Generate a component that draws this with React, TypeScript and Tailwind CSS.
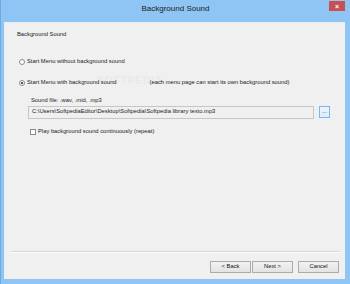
import React from "react";

const font = { fontFamily: '"Liberation Sans", Arial, sans-serif' };

function Radio({ checked }: { checked?: boolean }) {
  return (
    <span className="w-[6px] h-[6px] rounded-full border border-[#8a8a8a] bg-white flex items-center justify-center shrink-0">
      {checked && <span className="w-[2px] h-[2px] rounded-full bg-[#222]" />}
    </span>
  );
}

function Btn({ label }: { label: string }) {
  return (
    <button className="w-[41px] h-[12px] border border-[#acacac] bg-gradient-to-b from-[#f2f2f2] to-[#e3e3e3] text-[5.8px] text-[#111] flex items-center justify-center leading-none">
      {label}
    </button>
  );
}

export default function App() {
  return (
    <div
      className="relative w-[350px] h-[284px] bg-[#8ec5f4] border-l border-[#6fa9de] flex flex-col"
      style={font}
    >
      {/* TITLE BAR */}
      <div className="h-[22px] flex justify-center pt-[3px] text-[8px] text-[#1b1b1b]">
        Background Sound
      </div>
      <div className="absolute top-[1px] right-[5px] w-[16px] h-[10px] bg-[#c75050] flex items-center justify-center text-white text-[7px] font-bold leading-none">
        ×
      </div>

      {/* BODY */}
      <div className="flex-1 ml-[3px] mr-[5px] mb-[5px] bg-[#f0f0f0] border-t border-l border-[#e6eef7] flex flex-col text-[5.8px] text-[#1a1a1a] leading-none">
        <div className="pl-[12px] pt-[9px]">Background Sound</div>

        <div className="pl-[14px] pt-[21px] flex items-center gap-[2px]">
          <Radio />
          <span>Start Menu without background sound</span>
        </div>

        <div className="relative pl-[14px] pt-[15px] flex items-center gap-[2px]">
          {/* watermark */}
          <span className="absolute left-[92px] top-[11px] text-[10px] font-bold tracking-[1px] text-[#e9e9e9] z-0">
            SOFTPEDIA
          </span>
          <span className="relative z-10 flex items-center gap-[2px]">
            <Radio checked />
            <span>Start Menu with background sound</span>
          </span>
          <span className="relative z-10 ml-[31px]">
            (each menu page can start its own background sound)
          </span>
        </div>

        <div className="pl-[26px] pt-[12px]">Sound file: .wav, .mid, .mp3</div>
        <div className="pl-[23px] pt-[2px] flex items-center gap-[5px]">
          <div className="w-[286px] h-[13px] border border-[#c6c6c6] bg-[#f0f0f0] flex items-center pl-[3px]">
            C:\Users\SoftpediaEditor\Desktop\Softpedia\Softpedia library texto.mp3
          </div>
          <div className="w-[11px] h-[12px] border border-[#7eb4ea] bg-gradient-to-b from-[#edf5fc] to-[#dcecfc] flex items-center justify-center text-[6px] leading-none pb-[2px]">
            ...
          </div>
        </div>

        <div className="pl-[25px] pt-[10px] flex items-center gap-[2px]">
          <span className="w-[6px] h-[6px] border border-[#8a8a8a] bg-white shrink-0" />
          <span>Play background sound continuously (repeat)</span>
        </div>

        <div className="flex-1" />

        <div className="mx-[6px] h-[2px] border-t border-[#d6d6d6] border-b border-b-white" />
        <div className="flex justify-end items-center pr-[6px] pt-[8px] pb-[6px]">
          <Btn label="< Back" />
          <div className="w-[1px]" />
          <Btn label="Next >" />
          <div className="w-[5px]" />
          <Btn label="Cancel" />
        </div>
      </div>
    </div>
  );
}
